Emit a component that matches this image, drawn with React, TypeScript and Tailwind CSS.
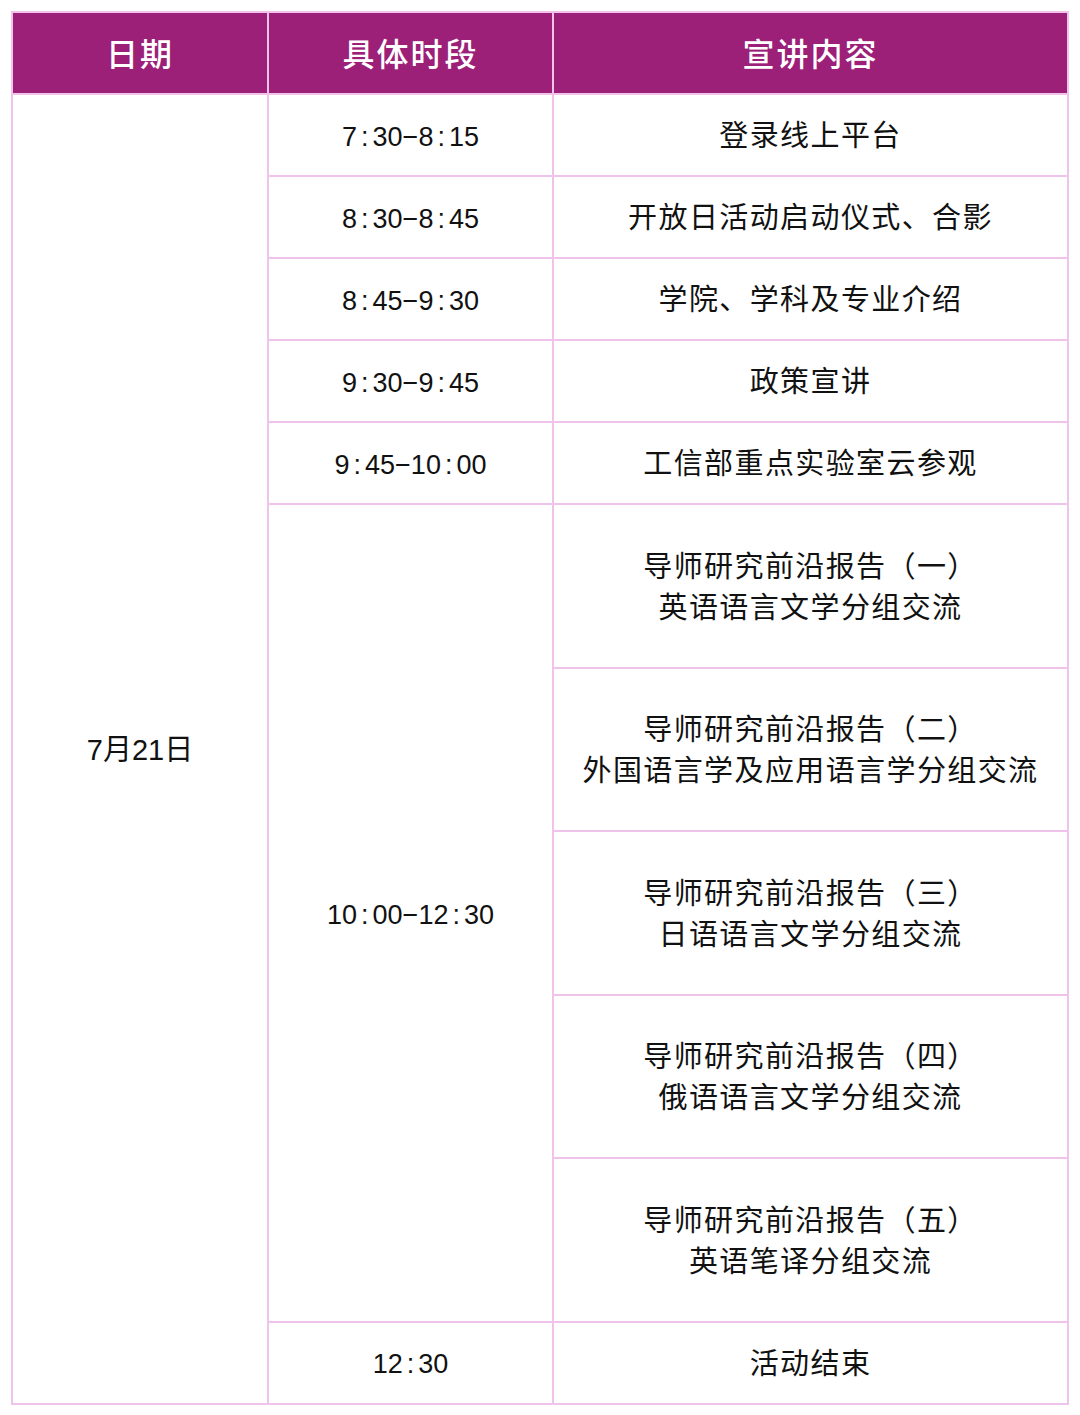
const font = { fontFamily: '"Liberation Sans", "Noto Sans CJK SC", sans-serif' }

const Time = ({ t }: { t: string }) => {
  // split on colon so the spacing around it matches the picture
  const parts = t.split(':')
  return (
    <span className="text-[27px]">
      {parts.map((p, i) => (
        <span key={i}>
          {i > 0 && <span className="mx-[4px]">:</span>}
          {p.replace('-', '−')}
        </span>
      ))}
    </span>
  )
}

const small = [
  { time: '7:30-8:15', text: '登录线上平台' },
  { time: '8:30-8:45', text: '开放日活动启动仪式、合影' },
  { time: '8:45-9:30', text: '学院、学科及专业介绍' },
  { time: '9:30-9:45', text: '政策宣讲' },
  { time: '9:45-10:00', text: '工信部重点实验室云参观' },
]

const reports = [
  ['导师研究前沿报告（一）', '英语语言文学分组交流'],
  ['导师研究前沿报告（二）', '外国语言学及应用语言学分组交流'],
  ['导师研究前沿报告（三）', '日语语言文学分组交流'],
  ['导师研究前沿报告（四）', '俄语语言文学分组交流'],
  ['导师研究前沿报告（五）', '英语笔译分组交流'],
]

const cell = 'border-2 border-[#f0c4ea] text-center align-middle p-0 pt-[4px]'
const zh = ' text-[29px] tracking-[1.4px]'

export default function App() {
  return (
    <div className="w-[1080px] h-[1415px] bg-white pt-[11px] pl-[11px]" style={font}>
      <table className="border-collapse w-[1056px] table-fixed text-[#111]">
        <colgroup>
          <col className="w-[256px]" />
          <col className="w-[285px]" />
          <col className="w-[515px]" />
        </colgroup>
        <thead>
          <tr className="h-[82px] bg-[#9c1f78] text-white text-[32px] font-medium tracking-[2px]">
            <th className={cell + ' font-medium'}>日期</th>
            <th className={cell + ' font-medium'}>具体时段</th>
            <th className={cell + ' font-medium'}>宣讲内容</th>
          </tr>
        </thead>
        <tbody>
          {small.map((r, i) => (
            <tr key={i} className="h-[82px]">
              {i === 0 && (
                <td rowSpan={12} className={cell + ' text-[29px]'}>7月21日</td>
              )}
              <td className={cell}><Time t={r.time} /></td>
              <td className={cell + zh}>{r.text}</td>
            </tr>
          ))}
          {reports.map((r, i) => (
            <tr key={i} className="h-[163.5px]">
              {i === 0 && (
                <td rowSpan={5} className={cell}><Time t="10:00-12:30" /></td>
              )}
              <td className={cell + zh + ' leading-[41px]'}>
                <div>{r[0]}</div>
                <div>{r[1]}</div>
              </td>
            </tr>
          ))}
          <tr className="h-[82px]">
            <td className={cell}><Time t="12:30" /></td>
            <td className={cell + zh}>活动结束</td>
          </tr>
        </tbody>
      </table>
    </div>
  )
}
